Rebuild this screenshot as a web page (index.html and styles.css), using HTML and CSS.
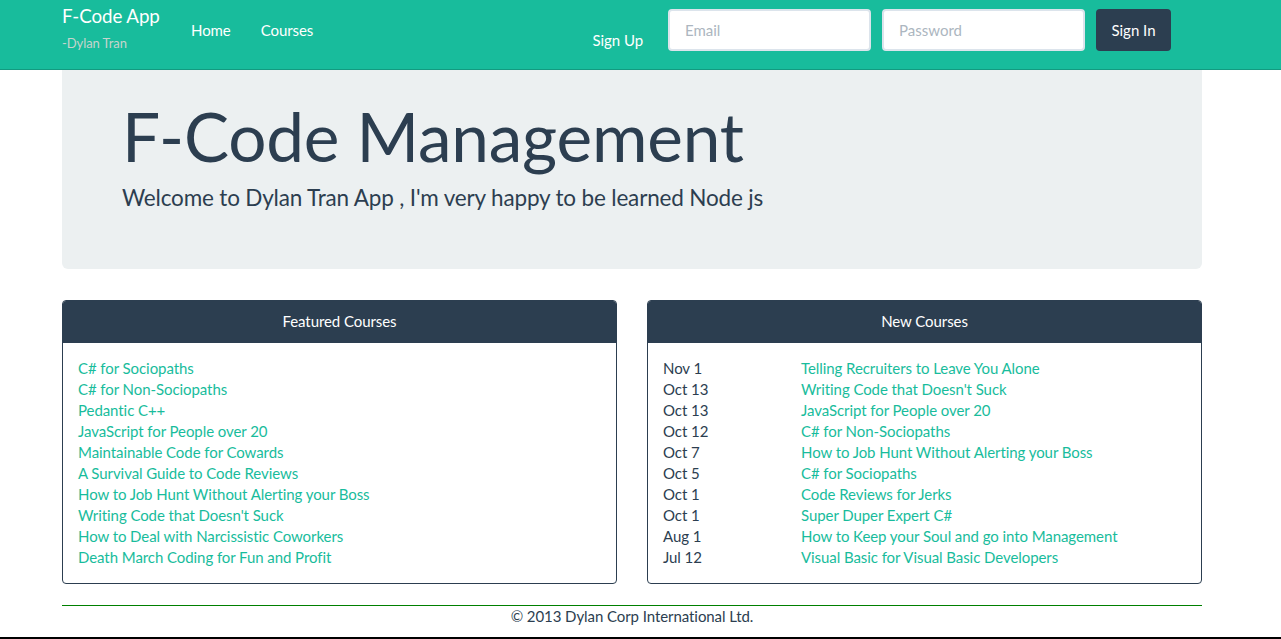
FILE: index.html
```html
<!DOCTYPE html>
<html lang="en">
<head>
<meta charset="utf-8">
<title>F-Code App</title>
<link rel="stylesheet" href="styles.css">
</head>
<body>
<nav class="navbar">
  <div class="container nav-inner">
    <div class="brand">
      <a class="brand-name" href="#">F-Code App</a>
      <span class="brand-sub">-Dylan Tran</span>
    </div>
    <ul class="nav-links">
      <li><a href="#">Home</a></li>
      <li><a href="#">Courses</a></li>
    </ul>
    <div class="nav-right">
      <a class="signup" href="#">Sign Up</a>
      <form class="signin-form">
        <input class="field" type="text" placeholder="Email">
        <input class="field" type="password" placeholder="Password">
        <button class="btn-signin" type="button">Sign In</button>
      </form>
    </div>
  </div>
</nav>

<main class="container">
  <section class="jumbotron">
    <h1>F-Code Management</h1>
    <p>Welcome to Dylan Tran App , I'm very happy to be learned Node js</p>
  </section>

  <div class="panels">
    <div class="panel">
      <div class="panel-heading">Featured Courses</div>
      <div class="panel-body">
        <ul class="course-list">
          <li><a href="#">C# for Sociopaths</a></li>
          <li><a href="#">C# for Non-Sociopaths</a></li>
          <li><a href="#">Pedantic C++</a></li>
          <li><a href="#">JavaScript for People over 20</a></li>
          <li><a href="#">Maintainable Code for Cowards</a></li>
          <li><a href="#">A Survival Guide to Code Reviews</a></li>
          <li><a href="#">How to Job Hunt Without Alerting your Boss</a></li>
          <li><a href="#">Writing Code that Doesn't Suck</a></li>
          <li><a href="#">How to Deal with Narcissistic Coworkers</a></li>
          <li><a href="#">Death March Coding for Fun and Profit</a></li>
        </ul>
      </div>
    </div>
    <div class="panel">
      <div class="panel-heading">New Courses</div>
      <div class="panel-body">
        <div class="new-list">
          <span class="date">Nov 1</span><a href="#">Telling Recruiters to Leave You Alone</a>
          <span class="date">Oct 13</span><a href="#">Writing Code that Doesn't Suck</a>
          <span class="date">Oct 13</span><a href="#">JavaScript for People over 20</a>
          <span class="date">Oct 12</span><a href="#">C# for Non-Sociopaths</a>
          <span class="date">Oct 7</span><a href="#">How to Job Hunt Without Alerting your Boss</a>
          <span class="date">Oct 5</span><a href="#">C# for Sociopaths</a>
          <span class="date">Oct 1</span><a href="#">Code Reviews for Jerks</a>
          <span class="date">Oct 1</span><a href="#">Super Duper Expert C#</a>
          <span class="date">Aug 1</span><a href="#">How to Keep your Soul and go into Management</a>
          <span class="date">Jul 12</span><a href="#">Visual Basic for Visual Basic Developers</a>
        </div>
      </div>
    </div>
  </div>

  <footer class="footer">
    <p>© 2013 Dylan Corp International Ltd.</p>
  </footer>
</main>
<div class="bottom-rule"></div>
</body>
</html>
```

FILE: styles.css
```css
* { box-sizing: border-box; }

html, body {
  margin: 0;
  padding: 0;
}

body {
  font-family: Lato, "Open Sans", "Liberation Sans", sans-serif;
  font-size: 15px;
  line-height: 21px;
  letter-spacing: -0.07px;
  color: #2c3e50;
  background: #fff;
  height: 639px;
  display: flex;
  flex-direction: column;
}

a { text-decoration: none; }

.container {
  width: 1140px;
  margin-left: 62px;
}

/* Navbar */
.navbar {
  background: #18bc9c;
  height: 70px;
  border-bottom: 1px solid #139a80;
}

.nav-inner {
  display: flex;
  align-items: flex-start;
  height: 69px;
}

.brand {
  display: flex;
  flex-direction: column;
  width: 129px;
}

.brand-name {
  color: #fff;
  font-size: 18.75px;
  line-height: 22px;
  padding-top: 5px;
}

.brand-sub {
  color: #c6d4cd;
  font-size: 13px;
  line-height: 16px;
  padding-top: 8px;
}

.nav-links {
  list-style: none;
  margin: 0;
  padding: 0;
  display: flex;
  gap: 30px;
}

.nav-links a {
  display: block;
  color: #fff;
  line-height: 21px;
  padding-top: 20px;
}

.nav-right {
  margin-left: auto;
  display: flex;
  align-items: flex-start;
  margin-right: 31px;
}

.signup {
  color: #fff;
  line-height: 21px;
  padding-top: 30px;
  margin-right: 25px;
}

.signin-form {
  display: flex;
  gap: 11px;
  padding-top: 9px;
}

.field {
  width: 203px;
  height: 42px;
  border: 2px solid #dce4ec;
  border-radius: 4px;
  padding: 0 15px;
  font-family: inherit;
  font-size: 15px;
  color: #2c3e50;
  background: #fff;
  outline: none;
}

.field::placeholder { color: #acb6c0; }

.btn-signin {
  width: 75px;
  height: 42px;
  border: none;
  border-radius: 4px;
  background: #2c3e50;
  color: #fff;
  font-family: inherit;
  font-size: 15px;
  padding: 0;
}

/* Jumbotron */
.jumbotron {
  background: #ecf0f1;
  border-radius: 0 0 6px 6px;
  padding: 29px 60px 55px;
  margin-bottom: 31px;
}

.jumbotron h1 {
  margin: 0;
  font-size: 67.5px;
  line-height: 74px;
  font-weight: 400;
  letter-spacing: -0.18px;
  color: #2c3e50;
}

.jumbotron p {
  margin: 9px 0 0;
  font-size: 22.5px;
  line-height: 32px;
  font-weight: 400;
  letter-spacing: -0.17px;
}

/* Panels */
.panels {
  display: grid;
  grid-template-columns: 555px 555px;
  column-gap: 30px;
  margin-bottom: 21px;
}

.panel {
  border: 1px solid #2c3e50;
  border-radius: 4px;
  overflow: hidden;
}

.panel-heading {
  background: #2c3e50;
  color: #fff;
  text-align: center;
  padding: 10px 15px 11px;
  line-height: 21px;
}

.panel-body {
  padding: 15px;
}

.course-list {
  list-style: none;
  margin: 0;
  padding: 0;
}

.course-list a,
.new-list a { color: #18bc9c; }

.new-list {
  display: grid;
  grid-template-columns: 138px 1fr;
  line-height: 21px;
}

.date { color: #2c3e50; }

/* Footer */
.footer {
  border-top: 1px solid #008000;
  text-align: center;
}

.footer p {
  margin: 0;
  line-height: 21px;
}

.bottom-rule {
  margin-top: auto;
  height: 2px;
  background: #000;
}
```
